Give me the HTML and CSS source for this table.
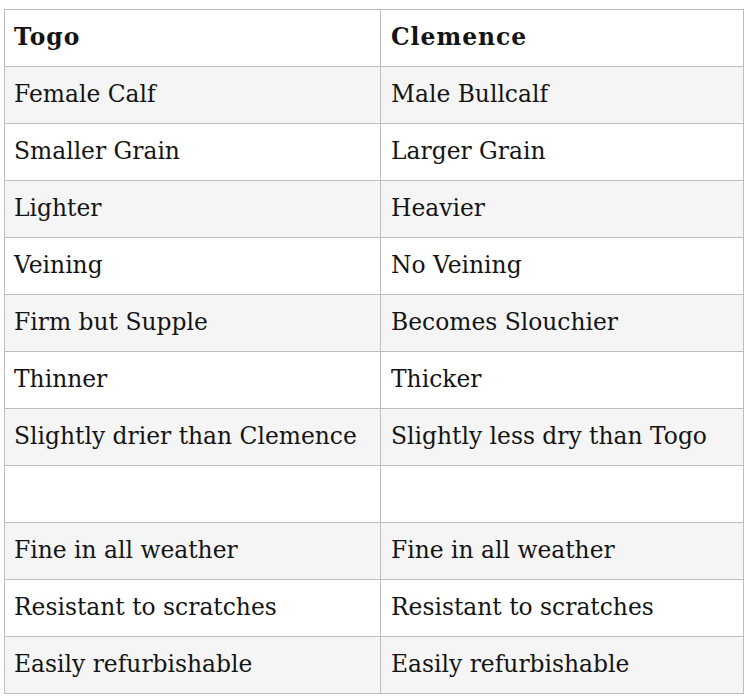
FILE: index.html
```html
<!DOCTYPE html>
<html>
<head>
<meta charset="utf-8">
<link rel="stylesheet" href="styles.css">
</head>
<body>
<table class="cmp">
  <colgroup><col class="c1"><col class="c2"></colgroup>
  <thead>
    <tr><th>Togo</th><th>Clemence</th></tr>
  </thead>
  <tbody>
    <tr><td>Female Calf</td><td>Male Bullcalf</td></tr>
    <tr><td>Smaller Grain</td><td>Larger Grain</td></tr>
    <tr><td>Lighter</td><td>Heavier</td></tr>
    <tr><td>Veining</td><td>No Veining</td></tr>
    <tr><td>Firm but Supple</td><td>Becomes Slouchier</td></tr>
    <tr><td>Thinner</td><td>Thicker</td></tr>
    <tr><td>Slightly drier than Clemence</td><td>Slightly less dry than Togo</td></tr>
    <tr><td></td><td></td></tr>
    <tr><td>Fine in all weather</td><td>Fine in all weather</td></tr>
    <tr><td>Resistant to scratches</td><td>Resistant to scratches</td></tr>
    <tr><td>Easily refurbishable</td><td>Easily refurbishable</td></tr>
  </tbody>
</table>
</body>
</html>
```
FILE: styles.css
```css
html, body {
  margin: 0;
  padding: 0;
  background: #fff;
}
body {
  padding: 9px 0 0 4px;
  font-family: "DejaVu Serif", "Liberation Serif", serif;
  color: #141414;
}
.cmp {
  border-collapse: collapse;
  width: 739px;
  table-layout: fixed;
}
.c1 { width: 376px; }
.c2 { width: 363px; }
.cmp th, .cmp td {
  border: 1px solid #bdbdbd;
  height: 57px;
  box-sizing: border-box;
  padding: 0 10px 2px 9px;
  font-size: 23.4px;
  text-align: left;
  vertical-align: middle;
  white-space: nowrap;
}
.cmp th + th, .cmp td + td {
  padding-left: 10px;
}
.cmp th {
  font-weight: bold;
  letter-spacing: 1px;
}
.cmp tbody tr:nth-child(odd) td {
  background: #f5f5f5;
}
```
